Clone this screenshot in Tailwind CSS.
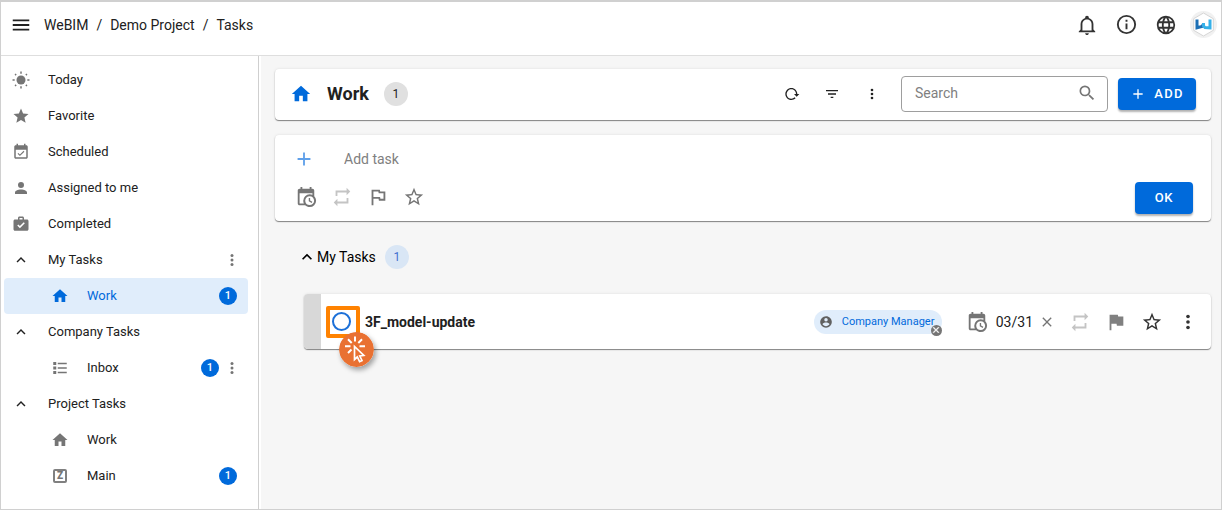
<!DOCTYPE html>
<html lang="en">
<head>
<meta charset="utf-8">
<meta name="viewport" content="width=device-width, initial-scale=1">
<title>WeBIM - Tasks</title>
<script src="https://cdn.jsdelivr.net/npm/@tailwindcss/browser@4"></script>
</head>
<body class="min-h-screen flex flex-col bg-white font-['Roboto',sans-serif] text-[#212121] text-sm border border-t-2 border-[#d0d0d0]">
<svg class="hidden" aria-hidden="true">
  <symbol id="menu" viewBox="0 0 24 24"><path d="M3,6H21V8H3V6M3,11H21V13H3V11M3,16H21V18H3V16Z"/></symbol>
  <symbol id="home" viewBox="0 0 24 24"><path d="M10,20V14H14V20H19V12H22L12,3L2,12H5V20H10Z"/></symbol>
  <symbol id="star" viewBox="0 0 24 24"><path d="M12,17.27L18.18,21L16.54,13.97L22,9.24L14.81,8.62L12,2L9.19,8.62L2,9.24L7.45,13.97L5.82,21L12,17.27Z"/></symbol>
  <symbol id="star-o" viewBox="0 0 24 24"><path d="M12,15.39L8.24,17.66L9.23,13.38L5.91,10.5L10.29,10.13L12,6.09L13.71,10.13L18.09,10.5L14.77,13.38L15.76,17.66M22,9.24L14.81,8.63L12,2L9.19,8.63L2,9.24L7.45,13.97L5.82,21L12,17.27L18.18,21L16.54,13.97L22,9.24Z"/></symbol>
  <symbol id="account" viewBox="0 0 24 24"><path d="M12,4A4,4 0 0,1 16,8A4,4 0 0,1 12,12A4,4 0 0,1 8,8A4,4 0 0,1 12,4M12,14C16.42,14 20,15.79 20,18V20H4V18C4,15.79 7.58,14 12,14Z"/></symbol>
  <symbol id="cal-check" viewBox="0 0 24 24"><path d="M19 3H18V1H16V3H8V1H6V3H5C3.89 3 3 3.9 3 5V19C3 20.11 3.9 21 5 21H19C20.11 21 21 20.11 21 19V5C21 3.9 20.11 3 19 3M19 19H5V9H19V19M10.56 17.46L16.5 11.53L15.43 10.47L10.56 15.34L8.45 13.23L7.39 14.29L10.56 17.46Z"/></symbol>
  <symbol id="briefcase" viewBox="0 0 24 24"><path d="M10.5,17.5L7,14L8.41,12.59L10.5,14.67L15.68,9.5L17.09,10.91M10,4H14V6H10M20,6H16V4C16,2.89 15.1,2 14,2H10C8.89,2 8,2.89 8,4V6H4C2.89,6 2,6.89 2,8V19C2,20.11 2.89,21 4,21H20C21.11,21 22,20.11 22,19V8C22,6.89 21.11,6 20,6Z"/></symbol>
  <symbol id="sun" viewBox="0 0 24 24"><circle cx="12" cy="12" r="6"/><path d="M12 .7V3.6M12 20.4V23.3M.7 12H3.6M20.4 12H23.3M4.1 4.1L5.5 5.5M18.5 18.5L19.9 19.9M4.1 19.9L5.5 18.5M18.5 5.5L19.9 4.1" stroke="currentColor" stroke-width="2"/></symbol>
  <symbol id="up" viewBox="0 0 24 24"><path d="M7.41,15.41L12,10.83L16.59,15.41L18,14L12,8L6,14L7.41,15.41Z"/></symbol>
  <symbol id="dots" viewBox="0 0 24 24"><circle cx="12" cy="6" r="2"/><circle cx="12" cy="12" r="2"/><circle cx="12" cy="18" r="2"/></symbol>
  <symbol id="list" viewBox="0 0 24 24"><path d="M3 4H7V8H3ZM3 10H7V14H3ZM3 16H7V20H3ZM9 5H21V7H9ZM9 11H21V13H9ZM9 17H21V19H9Z"/></symbol>
  <symbol id="bell" viewBox="0 0 24 24"><path d="M10 21H14C14 22.1 13.1 23 12 23S10 22.1 10 21M21 19V20H3V19L5 17V11C5 7.9 7.03 5.17 10 4.29C10 4.19 10 4.1 10 4C10 2.9 10.9 2 12 2S14 2.9 14 4C14 4.1 14 4.19 14 4.29C16.97 5.17 19 7.9 19 11V17L21 19M17 11C17 8.24 14.76 6 12 6S7 8.24 7 11V18H17V11Z"/></symbol>
  <symbol id="info" viewBox="0 0 24 24"><path d="M11,9H13V7H11M12,20C7.59,20 4,16.41 4,12C4,7.59 7.59,4 12,4C16.41,4 20,7.59 20,12C20,16.41 16.41,20 12,20M12,2A10,10 0 0,0 2,12A10,10 0 0,0 12,22A10,10 0 0,0 22,12A10,10 0 0,0 12,2M11,17H13V11H11V17Z"/></symbol>
  <symbol id="web" viewBox="0 0 24 24"><path d="M16.36,14C16.44,13.34 16.5,12.68 16.5,12C16.5,11.32 16.44,10.66 16.36,10H19.74C19.9,10.64 20,11.31 20,12C20,12.69 19.9,13.36 19.74,14M14.59,19.56C15.19,18.45 15.65,17.25 15.97,16H18.92C17.96,17.65 16.43,18.93 14.59,19.56M14.34,14H9.66C9.56,13.34 9.5,12.68 9.5,12C9.5,11.32 9.56,10.65 9.66,10H14.34C14.43,10.65 14.5,11.32 14.5,12C14.5,12.68 14.43,13.34 14.34,14M12,19.96C11.17,18.76 10.5,17.43 10.09,16H13.91C13.5,17.43 12.83,18.76 12,19.96M8,8H5.08C6.03,6.34 7.57,5.06 9.4,4.44C8.8,5.55 8.35,6.75 8,8M5.08,16H8C8.35,17.25 8.8,18.45 9.4,19.56C7.57,18.93 6.03,17.65 5.08,16M4.26,14C4.1,13.36 4,12.69 4,12C4,11.31 4.1,10.64 4.26,10H7.64C7.56,10.66 7.5,11.32 7.5,12C7.5,12.68 7.56,13.34 7.64,14M12,4.03C12.83,5.23 13.5,6.57 13.91,8H10.09C10.5,6.57 11.17,5.23 12,4.03M18.92,8H15.97C15.65,6.75 15.19,5.55 14.59,4.44C16.43,5.07 17.96,6.34 18.92,8M12,2C6.47,2 2,6.5 2,12A10,10 0 0,0 12,22A10,10 0 0,0 22,12A10,10 0 0,0 12,2Z"/></symbol>
  <symbol id="search" viewBox="0 0 24 24"><path d="M9.5,3A6.5,6.5 0 0,1 16,9.5C16,11.11 15.41,12.59 14.44,13.73L14.71,14H15.5L20.5,19L19,20.5L14,15.5V14.71L13.73,14.44C12.59,15.41 11.11,16 9.5,16A6.5,6.5 0 0,1 3,9.5A6.5,6.5 0 0,1 9.5,3M9.5,5C7,5 5,7 5,9.5C5,12 7,14 9.5,14C12,14 14,12 14,9.5C14,7 12,5 9.5,5Z"/></symbol>
  <symbol id="reload" viewBox="0 0 24 24"><path d="M2 12C2 16.97 6.03 21 11 21C13.39 21 15.68 20.06 17.4 18.4L15.9 16.9C14.63 18.25 12.86 19 11 19C4.76 19 1.64 11.46 6.05 7.05C10.46 2.64 18 5.77 18 12H15L19 16H19.1L23 12H20C20 7.03 15.97 3 11 3C6.03 3 2 7.03 2 12Z"/></symbol>
  <symbol id="filter" viewBox="0 0 24 24"><path d="M6,13H18V11H6M3,6V8H21V6M10,18H14V16H10V18Z"/></symbol>
  <symbol id="plus" viewBox="0 0 24 24"><path d="M19,13H13V19H11V13H5V11H11V5H13V11H19V13Z"/></symbol>
  <symbol id="cal-clock" viewBox="0 0 24 24"><path d="M15,13H16.5V15.82L18.94,17.23L18.19,18.53L15,16.69V13M19,8H5V19H9.67C9.24,18.09 9,17.07 9,16A7,7 0 0,1 16,9C17.07,9 18.09,9.24 19,9.67V8M5,21C3.89,21 3,20.1 3,19V5C3,3.89 3.89,3 5,3H6V1H8V3H16V1H18V3H19A2,2 0 0,1 21,5V11.1C22.24,12.36 23,14.09 23,16A7,7 0 0,1 16,23C14.09,23 12.36,22.24 11.1,21H5M16,11.15A4.85,4.85 0 0,0 11.15,16C11.15,18.68 13.32,20.85 16,20.85A4.85,4.85 0 0,0 20.85,16C20.85,13.32 18.68,11.15 16,11.15Z"/></symbol>
  <symbol id="repeat" viewBox="0 0 24 24"><path d="M17,17H7V14L3,18L7,22V19H19V13H17M7,7H17V10L21,6L17,2V5H5V11H7V7Z"/></symbol>
  <symbol id="flag" viewBox="0 0 24 24"><path d="M14.4,6L14,4H5V21H7V14H12.6L13,16H20V6H14.4Z"/></symbol>
  <symbol id="flag-o" viewBox="0 0 24 24"><path fill-rule="evenodd" d="M14.4,6L14,4H5V21H7V14H12.6L13,16H20V6H14.4M12.36,6L12.76,8H18V14H14.64L14.24,12H7V6H12.36Z"/></symbol>
  <symbol id="close" viewBox="0 0 24 24"><path d="M19,6.41L17.59,5L12,10.59L6.41,5L5,6.41L10.59,12L5,17.59L6.41,19L12,13.41L17.59,19L19,17.59L13.41,12L19,6.41Z"/></symbol>
  <symbol id="user-circle" viewBox="0 0 24 24"><path d="M12,19.2C9.5,19.2 7.29,17.92 6,16C6.03,14 10,12.9 12,12.9C14,12.9 17.97,14 18,16C16.71,17.92 14.5,19.2 12,19.2M12,5A3,3 0 0,1 15,8A3,3 0 0,1 12,11A3,3 0 0,1 9,8A3,3 0 0,1 12,5M12,2A10,10 0 0,0 2,12A10,10 0 0,0 12,22A10,10 0 0,0 22,12C22,6.47 17.5,2 12,2Z"/></symbol>
</svg>

<header class="flex items-center h-[54px] shrink-0 pl-[9px] pr-1 border-b border-[#dedede] pb-2">
  <button aria-label="Menu"><svg class="size-[22px] fill-current"><use href="#menu"/></svg></button>
  <nav aria-label="Breadcrumb" class="flex gap-2 ml-3 grow">
    <a href="#">WeBIM</a><span>/</span><a href="#">Demo Project</a><span>/</span><a href="#">Tasks</a>
  </nav>
  <div class="flex items-center gap-[17px] text-[#333]">
    <button aria-label="Notifications"><svg class="size-[22px] fill-current"><use href="#bell"/></svg></button>
    <button aria-label="Information"><svg class="size-[23px] fill-current"><use href="#info"/></svg></button>
    <button aria-label="Language"><svg class="size-[22px] fill-current"><use href="#web"/></svg></button>
  </div>
  <button aria-label="Account" class="ml-[13px] rounded-full bg-[#f1f1f1]">
    <svg class="size-[27px]" viewBox="0 0 27 27"><path d="M13.500 2L23.300 7.700V19.300L13.500 25L3.700 19.300V7.700Z" fill="#fff" stroke="#d6d6d6"/><path d="M7 8.500V16.800L12 15.500L13.500 13" fill="none" stroke="#1c6fb5" stroke-width="3"/><path d="M13.500 12V15L15 16.500L20 16.800V8.500" fill="none" stroke="#35b0e8" stroke-width="3"/></svg>
  </button>
</header>

<div class="flex grow">
  <aside class="w-[258px] shrink-0 border-r border-[#cfcfcf] pt-[6px] pl-[3px] pr-[10px] text-[13px]">
    <nav aria-label="Task lists">
      <a href="#" class="flex items-center h-9 pl-2 gap-[18px]"><svg class="size-[18px] fill-current text-[#757575]"><use href="#sun"/></svg>Today</a>
      <a href="#" class="flex items-center h-9 pl-2 gap-[18px]"><svg class="size-[18px] fill-current text-[#757575]"><use href="#star"/></svg>Favorite</a>
      <a href="#" class="flex items-center h-9 pl-2 gap-[18px]"><svg class="size-[18px] fill-current text-[#757575]"><use href="#cal-check"/></svg>Scheduled</a>
      <a href="#" class="flex items-center h-9 pl-2 gap-[18px]"><svg class="size-[18px] fill-current text-[#757575]"><use href="#account"/></svg>Assigned to me</a>
      <a href="#" class="flex items-center h-9 pl-2 gap-[18px]"><svg class="size-[18px] fill-current text-[#757575]"><use href="#briefcase"/></svg>Completed</a>

      <div class="flex items-center h-9 pl-2 pr-[7px]">
        <button class="flex items-center gap-[18px] grow"><svg class="size-[18px] fill-current"><use href="#up"/></svg>My Tasks</button>
        <button aria-label="My Tasks options"><svg class="size-[18px] fill-current text-[#757575]"><use href="#dots"/></svg></button>
      </div>
      <a href="#" aria-current="page" class="flex items-center h-9 pl-[47px] pr-[11px] gap-[18px] rounded bg-[#e0edfb] text-[#006adb]">
        <svg class="size-[18px] fill-current"><use href="#home"/></svg><span class="grow">Work</span>
        <span class="size-[18px] rounded-full bg-[#006adb] text-white text-[11px] font-medium flex items-center justify-center">1</span>
      </a>
      <button class="flex w-full items-center h-9 pl-2 gap-[18px]"><svg class="size-[18px] fill-current"><use href="#up"/></svg>Company Tasks</button>
      <div class="flex items-center h-9 pl-[47px] pr-[7px]">
        <a href="#" class="flex items-center grow gap-[18px]">
          <svg class="size-[18px] fill-current text-[#757575]"><use href="#list"/></svg><span class="grow">Inbox</span>
          <span class="size-[18px] rounded-full bg-[#006adb] text-white text-[11px] font-medium flex items-center justify-center">1</span>
        </a>
        <button aria-label="Inbox options" class="ml-1"><svg class="size-[18px] fill-current text-[#757575]"><use href="#dots"/></svg></button>
      </div>
      <button class="flex w-full items-center h-9 pl-2 gap-[18px]"><svg class="size-[18px] fill-current"><use href="#up"/></svg>Project Tasks</button>
      <a href="#" class="flex items-center h-9 pl-[47px] pr-[11px] gap-[18px]"><svg class="size-[18px] fill-current text-[#757575]"><use href="#home"/></svg>Work</a>
      <a href="#" class="flex items-center h-9 pl-[47px] pr-[11px] gap-[18px]">
        <span class="size-[18px] flex items-center justify-center" aria-hidden="true"><span class="size-[14px] rounded-xs border-2 border-[#808080] text-[#757575] text-[10px] leading-none font-black flex items-center justify-center">Z</span></span>
        <span class="grow">Main</span>
        <span class="size-[18px] rounded-full bg-[#006adb] text-white text-[11px] font-medium flex items-center justify-center">1</span>
      </a>
    </nav>
  </aside>

  <main class="grow min-w-0 bg-[#f6f6f6] border-l-2 border-white pl-[14px] pr-[10px] pt-[13px]">
    <section class="flex items-center h-[51px] pb-px rounded bg-white pl-[15px] pr-[15px] shadow-[0_1px_1px_rgba(0,0,0,0.45),0_0_3px_rgba(0,0,0,0.1)]">
      <svg class="size-[22px] fill-current text-[#006adb]"><use href="#home"/></svg>
      <h1 class="text-lg font-bold ml-[15px]">Work</h1>
      <span class="size-6 ml-[15px] rounded-full bg-[#e0e0e0] text-xs flex items-center justify-center">1</span>
      <div class="flex gap-6 ml-auto mr-[21px]">
        <button aria-label="Reload"><svg class="size-4 fill-current"><use href="#reload"/></svg></button>
        <button aria-label="Filter"><svg class="size-4 fill-current"><use href="#filter"/></svg></button>
        <button aria-label="More"><svg class="size-4 fill-current"><use href="#dots"/></svg></button>
      </div>
      <label class="flex items-center w-[207px] h-9 rounded border border-[#9e9e9e] pl-[13px] pr-[10px] pb-[2px]">
        <input type="text" placeholder="Search" aria-label="Search" class="grow min-w-0 outline-none placeholder:text-[#808080]">
        <svg class="size-[22px] fill-current text-[#757575]"><use href="#search"/></svg>
      </label>
      <button class="flex items-center justify-center gap-2 h-8 w-[78px] ml-[10px] rounded bg-[#006adb] text-white text-[13px] font-medium tracking-widest shadow-[0_2px_2px_rgba(0,0,0,0.3)]"><svg class="size-4 fill-current"><use href="#plus"/></svg>ADD</button>
    </section>

    <form class="mt-[15px] h-[86px] rounded bg-white pl-5 pr-[18px] shadow-[0_1px_1px_rgba(0,0,0,0.45),0_0_3px_rgba(0,0,0,0.1)]">
      <div class="flex items-center h-[47px]">
        <svg class="size-[22px] fill-current text-[#5fa0ea] -ml-[2px]"><use href="#plus"/></svg>
        <input type="text" placeholder="Add task" aria-label="Add task" class="grow ml-[29px] outline-none placeholder:text-[#808080]">
      </div>
      <div class="flex items-center h-8 text-[#757575]">
        <div class="flex gap-[14px] pb-[2px]">
          <button type="button" aria-label="Due date"><svg class="size-[22px] fill-current"><use href="#cal-clock"/></svg></button>
          <button type="button" aria-label="Repeat" class="text-[#c4c4c4]"><svg class="size-[22px] fill-current"><use href="#repeat"/></svg></button>
          <button type="button" aria-label="Flag"><svg class="size-[22px] fill-current"><use href="#flag-o"/></svg></button>
          <button type="button" aria-label="Favorite"><svg class="size-[22px] fill-current"><use href="#star-o"/></svg></button>
        </div>
        <button type="button" class="ml-auto h-8 w-[58px] rounded bg-[#006adb] text-white text-[13px] font-medium tracking-wider shadow-[0_2px_2px_rgba(0,0,0,0.3)]">OK</button>
      </div>
    </form>

    <div class="flex items-center h-[73px] pl-[22px] pb-[2px] text-black">
      <button class="flex items-center"><svg class="size-5 fill-current"><use href="#up"/></svg>My Tasks</button>
      <span class="size-6 ml-[9px] rounded-full bg-[#d9e6f5] text-xs text-[#3f6fd0] flex items-center justify-center">1</span>
    </div>

    <article class="flex items-center h-[55px] ml-[29px] rounded bg-white shadow-[0_1px_1px_rgba(0,0,0,0.45),0_0_3px_rgba(0,0,0,0.1)]">
      <div class="w-[17px] self-stretch rounded-l bg-[#d8d8d8]"></div>
      <div class="relative ml-[5px]">
        <label class="flex items-center w-[34px] h-8 border-4 border-[#ff8200] rounded-xs pl-[2px]">
          <input id="done" type="checkbox" aria-label="Complete 3F_model-update" class="appearance-none size-[19px] rounded-full border-2 border-[#1c70d8]">
        </label>
        <!-- click marker -->
        <svg class="absolute left-[13px] top-[26px] size-[35px] rounded-full shadow-[2px_3px_5px_rgba(0,0,0,0.35)]" viewBox="0 0 35 35" aria-hidden="true">
          <circle cx="17.500" cy="17.500" r="17.500" fill="#e97132"/>
          <g fill="none" stroke="#fff" stroke-width="2"><path d="M16 4.500V9.500M6 14.300H11.500M20.500 14.300H26M9 7.300L12.700 11M23 7.300L19.300 11M12.500 17.500L9 21"/><path stroke-width="1.700" d="M15.500 14.500V27.500L18.300 25L20.600 29.700L23 28.500L20.800 24L24.800 23.500Z"/></g>
        </svg>
      </div>
      <label for="done" class="font-bold ml-[5px]">3F_model-update</label>
      <div class="relative ml-auto flex items-center h-6 w-[128px] pl-[5px] rounded-full bg-[#e0edfb] text-[11px] text-[#006adb]">
        <svg class="size-[14px] fill-current text-[#616161]"><use href="#user-circle"/></svg>
        <span class="ml-[9px] whitespace-nowrap">Company Manager</span>
        <button aria-label="Remove Company Manager" class="absolute right-0 -bottom-[2px] size-[11px] rounded-full bg-[#757575] text-white flex items-center justify-center"><svg class="size-[10px] fill-current stroke-current stroke-1"><use href="#close"/></svg></button>
      </div>
      <button aria-label="Due date" class="ml-6 text-[#757575]"><svg class="size-[22px] fill-current"><use href="#cal-clock"/></svg></button>
      <span class="ml-2">03/31</span>
      <button aria-label="Clear date" class="ml-[6px] text-[#757575]"><svg class="size-4 fill-current"><use href="#close"/></svg></button>
      <div class="flex items-center gap-[14px] ml-[14px] mr-3 text-[#333]">
        <button aria-label="Repeat" class="text-[#c4c4c4]"><svg class="size-[22px] fill-current"><use href="#repeat"/></svg></button>
        <button aria-label="Flag" class="text-[#808080]"><svg class="size-[22px] fill-current"><use href="#flag"/></svg></button>
        <button aria-label="Favorite"><svg class="size-[22px] fill-current"><use href="#star-o"/></svg></button>
        <button aria-label="Task options"><svg class="size-[22px] fill-current"><use href="#dots"/></svg></button>
      </div>
    </article>
  </main>
</div>
</body>
</html>
